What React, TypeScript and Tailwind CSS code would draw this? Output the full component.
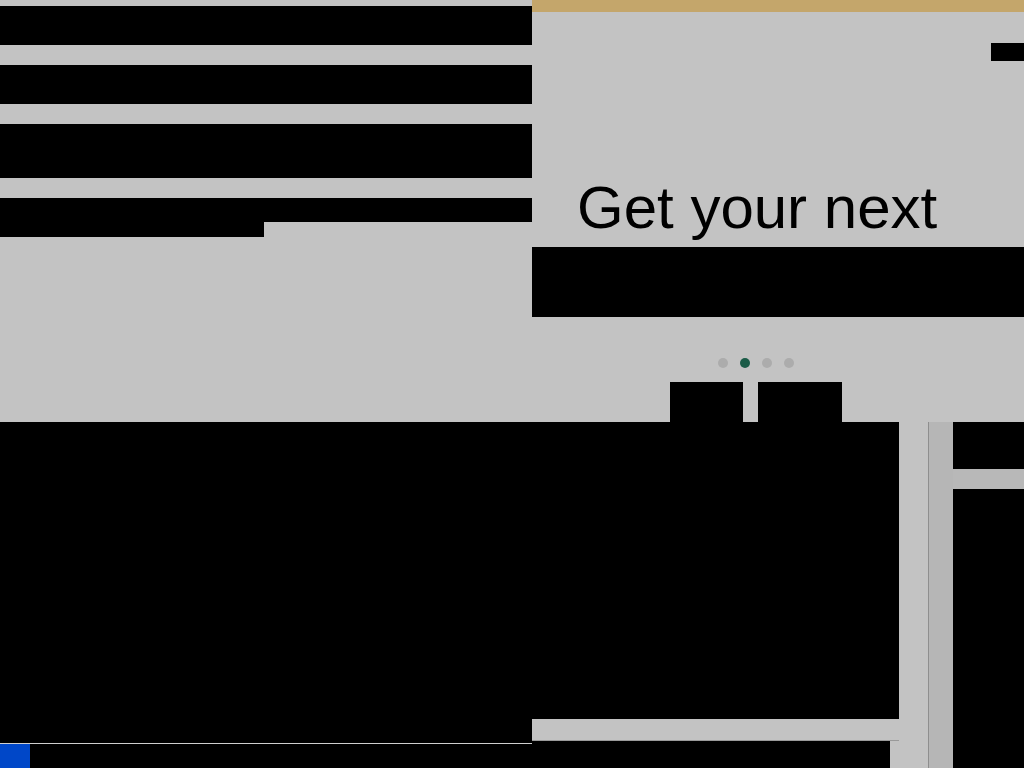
import React from "react";

export default function App() {
  return (
    <div className="w-[1024px] h-[768px] overflow-hidden bg-[#c3c3c3] flex flex-col" style={{ fontFamily: '"Liberation Sans", Arial, sans-serif' }}>
      {/* top section */}
      <div className="flex h-[422px]">
        {/* left column */}
        <div className="w-[532px] flex flex-col pt-[6px]">
          <div className="h-[39px] bg-black" />
          <div className="h-[39px] bg-black mt-[20px]" />
          <div className="h-[54px] bg-black mt-[20px]" />
          <div className="h-[24px] bg-black mt-[20px]" />
          <div className="h-[15px] w-[264px] bg-black" />
        </div>
        {/* right column */}
        <div className="flex-1 flex flex-col">
          <div className="h-[12px] bg-[#c4a66b]" />
          <div className="flex justify-end mt-[31px]">
            <div className="w-[33px] h-[18px] bg-black" />
          </div>
          <h1 className="mt-[117px] pl-[45px] text-[60px] leading-none text-black h-[60px] whitespace-nowrap">
            Get your next
          </h1>
          <div className="mt-[9px] h-[70px] bg-black" />
          <div className="mt-[41px] pl-[186px] flex gap-[12px]">
            <span className="w-[10px] h-[10px] rounded-full bg-[#acacac]" />
            <span className="w-[10px] h-[10px] rounded-full bg-[#1b5c48]" />
            <span className="w-[10px] h-[10px] rounded-full bg-[#acacac]" />
            <span className="w-[10px] h-[10px] rounded-full bg-[#acacac]" />
          </div>
          <div className="mt-[14px] pl-[138px] flex gap-[15px]">
            <div className="w-[73px] h-[40px] bg-black" />
            <div className="w-[84px] h-[40px] bg-black" />
          </div>
        </div>
      </div>
      {/* bottom section */}
      <div className="flex flex-1">
        <div className="w-[532px] flex flex-col">
          <div className="h-[321px] bg-black" />
          <div className="h-[1px] bg-[#cfcfcf]" />
          <div className="flex-1 bg-black flex">
            <div className="w-[30px] bg-[#0047c8]" />
          </div>
        </div>
        <div className="w-[367px] flex flex-col">
          <div className="h-[297px] bg-black" />
          <div className="h-[22px] bg-[#c3c3c3] border-b border-[#9a9a9a]" />
          <div className="flex-1 w-[358px] bg-black" />
        </div>
        <div className="w-[29px] bg-[#c3c3c3]" />
        <div className="w-[25px] bg-[#b6b6b6] border-l border-[#8e8e8e]" />
        <div className="flex-1 flex flex-col">
          <div className="h-[47px] bg-black" />
          <div className="h-[20px] bg-[#b8b8b8]" />
          <div className="flex-1 bg-black" />
        </div>
      </div>
    </div>
  );
}
